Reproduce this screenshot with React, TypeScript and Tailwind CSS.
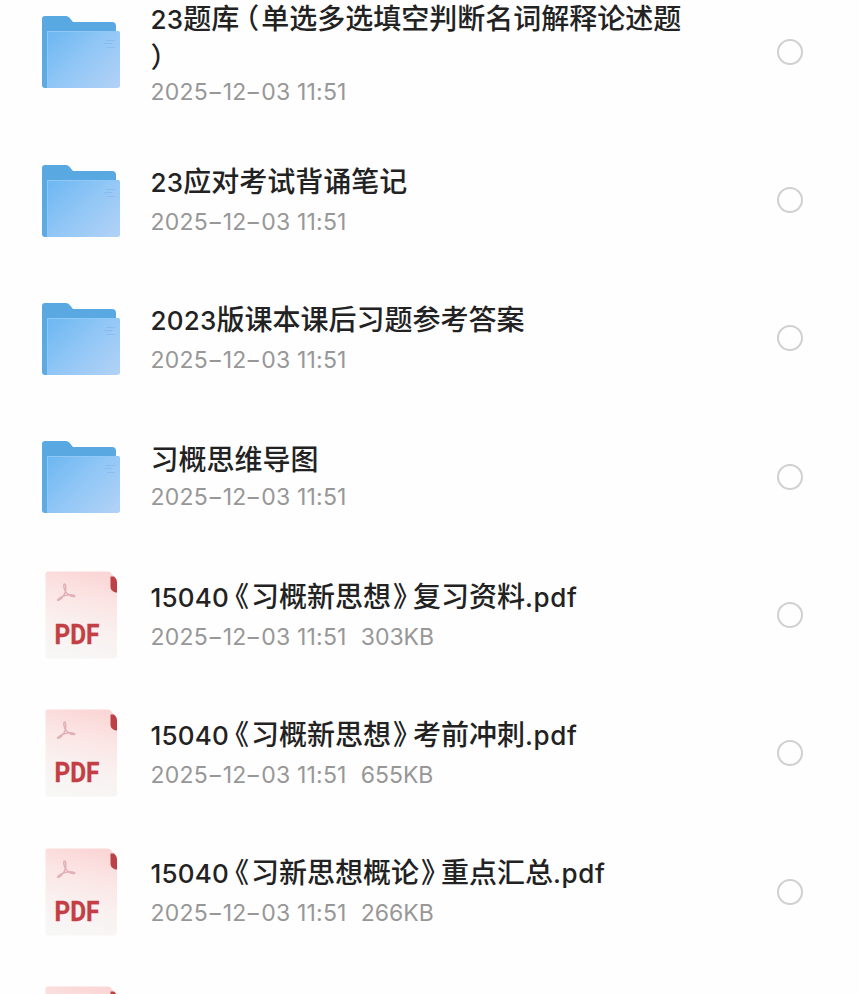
import { Fragment } from "react";
import clsx from "clsx";

type FileItem = {
  kind: "folder" | "pdf";
  name?: string;
  size?: string;
};

const DATE = "2025-12-03 11:51";

const files: FileItem[] = [
  { kind: "folder", name: "23题库（单选多选填空判断名词解释论述题）" },
  { kind: "folder", name: "23应对考试背诵笔记" },
  { kind: "folder", name: "2023版课本课后习题参考答案" },
  { kind: "folder", name: "习概思维导图" },
  { kind: "pdf", name: "15040《习概新思想》复习资料.pdf", size: "303KB" },
  { kind: "pdf", name: "15040《习概新思想》考前冲刺.pdf", size: "655KB" },
  { kind: "pdf", name: "15040《习新思想概论》重点汇总.pdf", size: "266KB" },
  { kind: "pdf" },
];

function FolderIcon() {
  return (
    <svg width="78" height="73" viewBox="0 0 78 73" aria-hidden="true">
      <defs>
        <linearGradient id="folder-back" x1="0" y1="0" x2="0" y2="1">
          <stop offset="0" stopColor="#58a8e2" />
          <stop offset="1" stopColor="#60aae2" />
        </linearGradient>
        <linearGradient id="folder-front" x1="0" y1="0.1" x2="1" y2="0.9">
          <stop offset="0" stopColor="#6fb8f2" />
          <stop offset="0.5" stopColor="#92c7f6" />
          <stop offset="1" stopColor="#b0d1f6" />
        </linearGradient>
      </defs>
      <path
        d="M3 0H24Q26 0 27.300 1.500L31 6H70Q74 6 74 10V72H3Q0 72 0 69V3Q0 0 3 0Z"
        fill="url(#folder-back)"
      />
      <path d="M5 15H76Q78 15 78 17V69.500Q78 72 75 72H5Z" fill="url(#folder-front)" />
      <path d="M5.500 72V15.500H77" fill="none" stroke="#8fc9f8" strokeWidth="1" />
      <path d="M64 24.500H73M62 27.500H70M65 31.500H73" stroke="#79b4ea" strokeWidth="1.200" opacity="0.5" />
    </svg>
  );
}

function PdfIcon() {
  return (
    <svg width="73" height="88" viewBox="0 0 73 88" aria-hidden="true">
      <defs>
        <linearGradient id="pdf-page" x1="0.6" y1="0" x2="0.4" y2="1">
          <stop offset="0" stopColor="#fbd6d6" />
          <stop offset="0.3" stopColor="#fbe5e4" />
          <stop offset="0.65" stopColor="#f9f1f0" />
          <stop offset="1" stopColor="#f7f7f6" />
        </linearGradient>
      </defs>
      <path
        d="M3 0.500H63Q65 0.500 66 2L72 9V85Q72 87.500 69 87.500H3Q0.500 87.500 0.500 85V3Q0.500 0.500 3 0.500Z"
        fill="url(#pdf-page)"
      />
      <path d="M65.500 5.500H69Q72 8 72 11V21.500H70.500Q65.500 19.500 65.500 16Z" fill="#bd4046" />
      <path
        d="M19.500 13C18 13.500 19 18.500 20.500 20.500C22 23 26 26 29.500 25.500C31 24.500 27 23.200 23.500 23.800C19 24.500 13.500 27 12.500 29C14.500 31 19.500 24 20.500 20.500C21 18 21 13 19.500 13Z"
        fill="none"
        stroke="#e0b0b6"
        strokeWidth="1.400"
        strokeLinejoin="round"
      />
      <text
        x="9.500"
        y="72.500"
        textLength="45"
        lengthAdjust="spacingAndGlyphs"
        fill="#c33f45"
        stroke="#c33f45"
        strokeWidth="0.300"
        className="font-['Roboto',sans-serif] text-[27px] font-bold"
      >
        PDF
      </text>
    </svg>
  );
}

// Brackets use half-width forms with a little side bearing, latin runs use their own face.
function FileName({ name }: { name: string }) {
  const parts = name.split(/([（）《》]|[0-9A-Za-z.]+)/).filter(Boolean);

  return (
    <>
      {parts.map((part, index) => {
        if (part === "（" || part === "《") {
          return (
            <span key={index} className="pl-[6px] pr-[2px] [font-feature-settings:'halt']">
              {part}
            </span>
          );
        }
        if (part === "》" || part === "）") {
          return (
            <span key={index} className={clsx("[font-feature-settings:'halt']", part === "》" && "pl-[2px] pr-[6px]")}>
              {part}
            </span>
          );
        }
        if (/^[0-9A-Za-z.]+$/.test(part)) {
          return (
            <span
              key={index}
              className={clsx(
                "font-['Inter',sans-serif] text-[26px] font-medium",
                part === ".pdf" ? "tracking-[0.6px]" : "tracking-[0.2px]",
              )}
            >
              {part}
            </span>
          );
        }
        return <Fragment key={index}>{part}</Fragment>;
      })}
    </>
  );
}

function FileMeta({ size }: { size?: string }) {
  const [year, month, rest] = DATE.split("-");
  const dash = <span className="mx-[2px] inline-block scale-x-150">-</span>;

  return (
    <p className="flex whitespace-pre font-['Inter',sans-serif] text-[23px] leading-[30px] tracking-[0.2px] text-[#979797]">
      <span>
        {year}
        {dash}
        {month}
        {dash}
        {rest}
      </span>
      {size && <span className="ml-[14px] tracking-normal">{size}</span>}
    </p>
  );
}

function FileRow({ file, first }: { file: FileItem; first: boolean }) {
  return (
    <li
      className={clsx(
        "flex shrink-0 items-center pl-[42px] pr-[56px]",
        first ? "h-[159px]" : "h-[138.3px]",
      )}
    >
      <div className={clsx("flex w-[78px] shrink-0 justify-center", file.kind === "folder" && "pt-[2px]")}>
        {file.kind === "folder" ? <FolderIcon /> : <PdfIcon />}
      </div>
      {file.name && (
        <div className={clsx("ml-[30.5px] w-[540px]", first ? "pt-[3px]" : "pb-[2px]")}>
          <h2 className="font-['Noto_Sans_CJK_SC',sans-serif] text-[28px] font-medium leading-[36px] text-[#222] [line-break:anywhere]">
            <FileName name={file.name} />
          </h2>
          <div className={first ? "mt-[3px]" : "mt-[6px]"}>
            <FileMeta size={file.size} />
          </div>
        </div>
      )}
      <button
        type="button"
        aria-label="选择"
        className="ml-auto size-[26px] shrink-0 rounded-full border-[2.5px] border-[#d0d0d0]"
      />
    </li>
  );
}

export default function App() {
  return (
    <main className="h-[994px] w-[859px] overflow-hidden bg-[#fefefe]">
      <ul className="-mt-[28px] flex flex-col">
        {files.map((file, index) => (
          <FileRow key={index} file={file} first={index === 0} />
        ))}
      </ul>
    </main>
  );
}
